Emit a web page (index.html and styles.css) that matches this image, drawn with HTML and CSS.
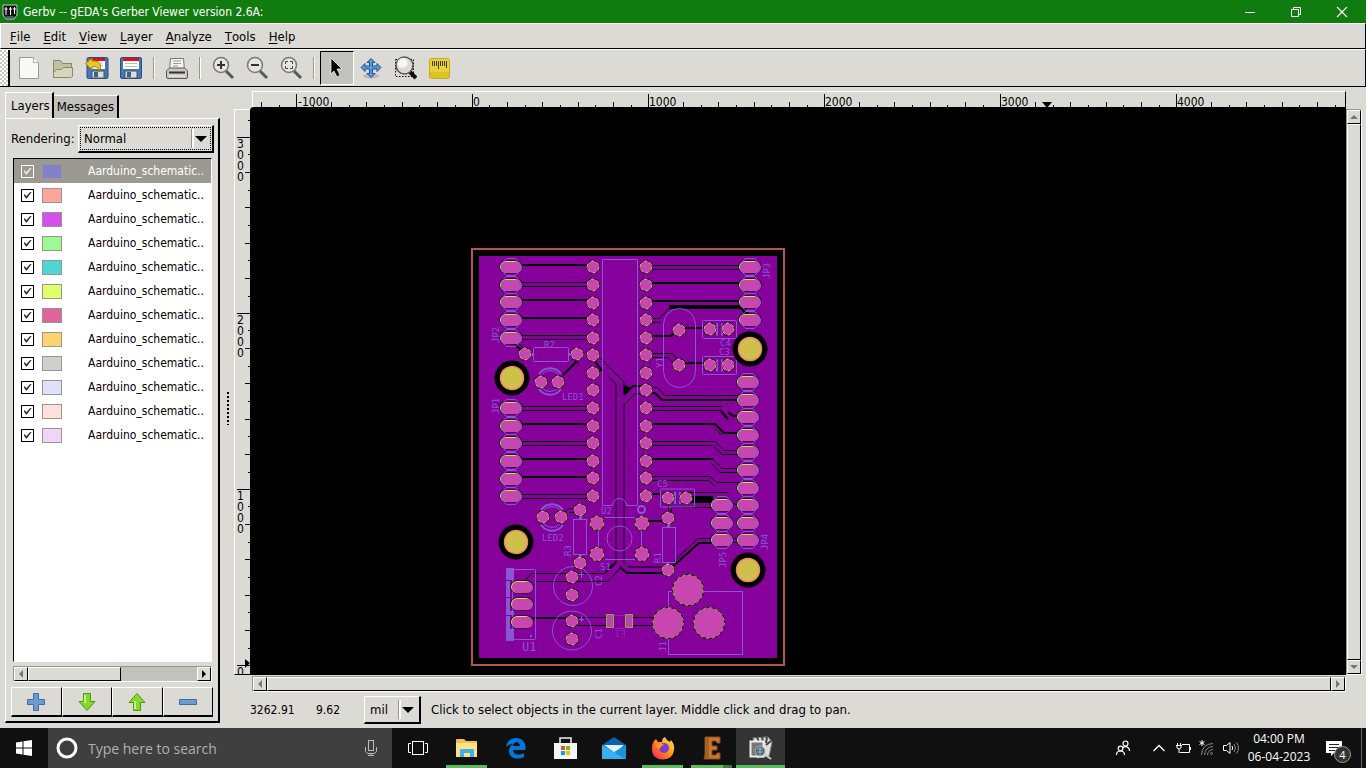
FILE: index.html
```html
<!DOCTYPE html>
<html lang="en">
<head>
<meta charset="utf-8">
<title>Gerbv</title>
<link rel="stylesheet" href="styles.css">
</head>
<body>
<header class="titlebar">
  <svg class="app-icon" width="16" height="16" viewBox="0 0 16 16"><path d="M1 1h14v10l-3 4H4l-3-4z" fill="#111" stroke="#c5cdd8"/><path d="M2.500 5h3M4 3v8M7 5h3M8.500 3v8M11 5h3M12.500 3v7" stroke="#fff" fill="none"/><path d="M4 13h8" stroke="#8aa0bd"/></svg>
  <h1 class="title">Gerbv -- gEDA's Gerber Viewer version 2.6A:</h1>
  <div class="window-buttons">
    <button aria-label="Minimize"><svg width="12" height="12"><path d="M1 6.500h10" stroke="#fff"/></svg></button>
    <button aria-label="Restore"><svg width="12" height="12" fill="none" stroke="#fff"><path d="M1.500 3.500h7v7h-7zM3.500 3v-1.500h7v7h-2"/></svg></button>
    <button aria-label="Close"><svg width="12" height="12"><path d="M1 1l10 10M11 1L1 11" stroke="#fff" stroke-width="1.200"/></svg></button>
  </div>
</header>
<nav class="menubar">
  <button><u>F</u>ile</button><button><u>E</u>dit</button><button><u>V</u>iew</button><button><u>L</u>ayer</button><button><u>A</u>nalyze</button><button><u>T</u>ools</button><button><u>H</u>elp</button>
</nav>
<div class="toolbar">
  <span class="handle"></span>
  <button aria-label="New"><svg width="24" height="24"><path d="M2.500 1.500h14l5 5v16h-19z" fill="#f8f8f7" stroke="#9a9a96"/><path d="M16.500 1.500v5h5" fill="#fff" stroke="#aaa"/></svg></button>
  <button aria-label="Open"><svg width="24" height="24"><path d="M2.500 21V4.500h7l2 3h9V12" fill="#bfc39f" stroke="#85896a"/><path d="M2.500 21.500v-5l3-3h5l2-2h9v9l-2 1z" fill="#d3d8bb" stroke="#85896a"/></svg></button>
  <button aria-label="Revert"><svg width="24" height="24"><rect x="2" y="1.500" width="21" height="21" rx="1.500" fill="#4477b4" stroke="#244f8b"/><path d="M5 2h15v11H5z" fill="#fff"/><path d="M5 2h15v3H5z" fill="#d11"/><path d="M7 7h11M7 10h11" stroke="#bbb"/><path d="M7 15h12v7H7z" fill="#ddd" stroke="#456"/><path d="M9 16h4v5H9z" fill="#3c5f91"/><path d="M.5 7.500L7 2v3c7-1 11 4 7 11 0-4-2-6-7-5v3z" fill="#edc525" stroke="#a57c00"/></svg></button>
  <button aria-label="Save"><svg width="24" height="24"><rect x="1.500" y="1.500" width="21" height="21" rx="1.500" fill="#4477b4" stroke="#244f8b"/><path d="M4 2h16v11H4z" fill="#fff"/><path d="M4 2h16v3H4z" fill="#d11"/><path d="M6 7.500h12M6 10.500h12" stroke="#bbb"/><path d="M6 15h12v7H6z" fill="#ddd" stroke="#456"/><path d="M8 16h4v5H8z" fill="#3c5f91"/></svg></button>
  <span class="sep"></span>
  <button aria-label="Print"><svg width="24" height="24"><path d="M5.500 2.500h13l1 12h-15z" fill="#f5f5f3" stroke="#777"/><path d="M8 5h8M8 7.500h8M8 10h5" stroke="#999"/><path d="M1.500 15l3-3h15l3 3v6q0 1.500-1.500 1.500H3q-1.500 0-1.500-1.500z" fill="#c9c9c5" stroke="#555"/><path d="M4 16.500h16" stroke="#333" stroke-width="2"/><path d="M4 20h16" stroke="#f4f4f4"/></svg></button>
  <span class="sep"></span>
  <button aria-label="Zoom in"><svg width="24" height="24"><path d="M15 15l7 7" stroke="#555b57" stroke-width="3"/><circle cx="10" cy="9" r="7.500" fill="#e5e5e1" stroke="#777a75" stroke-width="1.500"/><path d="M6 9h8M10 5v8" stroke="#333" stroke-width="2"/></svg></button>
  <button aria-label="Zoom out"><svg width="24" height="24"><path d="M15 15l7 7" stroke="#555b57" stroke-width="3"/><circle cx="10" cy="9" r="7.500" fill="#e5e5e1" stroke="#777a75" stroke-width="1.500"/><path d="M6 9h8" stroke="#333" stroke-width="2"/></svg></button>
  <button aria-label="Zoom to fit"><svg width="24" height="24"><path d="M15 15l7 7" stroke="#555b57" stroke-width="3"/><circle cx="10" cy="9" r="7.500" fill="#e5e5e1" stroke="#777a75" stroke-width="1.500"/><path d="M6.500 8V5.500H9M11 5.500h2.500V8M13.500 10v2.500H11M9 12.500H6.500V10" fill="none" stroke="#444"/></svg></button>
  <span class="sep"></span>
  <button class="pressed" aria-label="Pointer"><svg width="24" height="24"><path d="M6 2l11 11h-5l3 6-3 2-3-6-3 3z" fill="#000" stroke="#fff" stroke-width=".7"/></svg></button>
  <button aria-label="Pan"><svg width="24" height="24"><ellipse cx="12" cy="20" rx="8" ry="2.500" fill="#bbb9b3"/><path d="M12 2.500l4 4h-2.500V10H18V7.500l4 4-4 4V13h-4.500v4.500H16l-4 4-4-4h2.500V13H6v2.500l-4-4 4-4V10h4.500V6.500H8z" fill="#5c94d6" stroke="#1e5197"/></svg></button>
  <button aria-label="Zoom area"><svg width="24" height="24"><rect x="2.500" y="3.500" width="18" height="17" fill="none" stroke="#000" stroke-dasharray="1.500 1.500"/><path d="M17 16l6 6" stroke="#111" stroke-width="4"/><circle cx="11.500" cy="9.500" r="8.500" fill="#dadad8" stroke="#555" stroke-width="1.500"/><circle cx="9.500" cy="7" r="5" fill="#fff" opacity=".75"/></svg></button>
  <button aria-label="Measure"><svg width="24" height="24"><rect x="2.500" y="2.500" width="20" height="20" rx="2" fill="#e8d23b" stroke="#c4aa25"/><path d="M3 16h19v6H3z" fill="#dcc321"/><path d="M5.500 5v5M7.500 5v5M9.500 5v5M11.500 5v8M13.500 5v5M15.500 5v5M17.500 5v5M19.500 5v7" stroke="#3d3712"/></svg></button>
</div>
<main class="workspace">
  <aside class="sidebar">
    <div class="tabs" role="tablist"><button class="tab active" role="tab">Layers</button><button class="tab" role="tab">Messages</button></div>
    <section class="panel">
      <div class="rendering">
        <label for="rendering">Rendering:</label>
        <span class="combo wide"><select id="rendering"><option>Normal</option></select><svg width="12" height="8"><path d="M0 1h12L6 7z"/></svg></span>
      </div>
      <ul class="layers">
        <li class="selected"><input type="checkbox" id="l1" checked><i class="swatch c1"></i><label for="l1">Aarduino_schematic..</label></li>
        <li><input type="checkbox" id="l2" checked><i class="swatch c2"></i><label for="l2">Aarduino_schematic..</label></li>
        <li><input type="checkbox" id="l3" checked><i class="swatch c3"></i><label for="l3">Aarduino_schematic..</label></li>
        <li><input type="checkbox" id="l4" checked><i class="swatch c4"></i><label for="l4">Aarduino_schematic..</label></li>
        <li><input type="checkbox" id="l5" checked><i class="swatch c5"></i><label for="l5">Aarduino_schematic..</label></li>
        <li><input type="checkbox" id="l6" checked><i class="swatch c6"></i><label for="l6">Aarduino_schematic..</label></li>
        <li><input type="checkbox" id="l7" checked><i class="swatch c7"></i><label for="l7">Aarduino_schematic..</label></li>
        <li><input type="checkbox" id="l8" checked><i class="swatch c8"></i><label for="l8">Aarduino_schematic..</label></li>
        <li><input type="checkbox" id="l9" checked><i class="swatch c9"></i><label for="l9">Aarduino_schematic..</label></li>
        <li><input type="checkbox" id="l10" checked><i class="swatch c10"></i><label for="l10">Aarduino_schematic..</label></li>
        <li><input type="checkbox" id="l11" checked><i class="swatch c11"></i><label for="l11">Aarduino_schematic..</label></li>
        <li><input type="checkbox" id="l12" checked><i class="swatch c12"></i><label for="l12">Aarduino_schematic..</label></li>
      </ul>
      <div class="scroll list-scroll"><button aria-label="Scroll left"><svg width="8" height="8"><path d="M6 0v8L2 4z" fill="#777"/></svg></button><span class="thumb"></span><button class="end" aria-label="Scroll right"><svg width="8" height="8"><path d="M2 0v8l4-4z"/></svg></button></div>
      <div class="actions">
        <button aria-label="Add layer"><svg width="20" height="20"><path d="M7.500 1.500h5v6h6v5h-6v6h-5v-6h-6v-5h6z" fill="#6f9ad0" stroke="#3f6ca9"/></svg></button>
        <button aria-label="Move down"><svg width="20" height="20"><path d="M6.500 1.500h7v8h4.500l-8 9-8-9h4.500z" fill="#85d834" stroke="#4e9a06"/><path d="M8 3v8" stroke="#c5f18e" stroke-width="2"/></svg></button>
        <button aria-label="Move up"><svg width="20" height="20"><path d="M6.500 18.500h7v-8h4.500l-8-9-8 9h4.500z" fill="#85d834" stroke="#4e9a06"/><path d="M8 9v8" stroke="#c5f18e" stroke-width="2"/></svg></button>
        <button aria-label="Remove layer"><svg width="20" height="20"><path d="M1.500 7.500h17v5h-17z" fill="#6f9ad0" stroke="#3f6ca9"/></svg></button>
      </div>
    </section>
  </aside>
  <div class="splitter"></div>
  <section class="viewer">
    <div class="plot">
      <div class="ruler-top">
        <svg width="100%" height="16">
          <defs><pattern id="ht" x="42" y="0" width="176" height="16" patternUnits="userSpaceOnUse"><path d="M1.500 2v14M36.500 10v6M71.500 10v6M107.500 10v6M142.500 10v6M18.500 13v3M54.500 13v3M89.500 13v3M124.500 13v3M160.500 13v3" stroke="#000"/></pattern></defs>
          <rect width="100%" height="16" fill="url(#ht)"/>
          <g class="ruler-text"><text x="45" y="14">-1000</text><text x="220" y="14">0</text><text x="396" y="14">1000</text><text x="572" y="14">2000</text><text x="748" y="14">3000</text><text x="924" y="14">4000</text></g>
          <path d="M789 10h10l-5 6z"/>
        </svg>
      </div>
      <div class="ruler-left">
        <svg width="16" height="100%">
          <defs><pattern id="vt" x="0" y="26" width="16" height="176" patternUnits="userSpaceOnUse"><path d="M2 1.500h14M10 36.500h6M10 71.500h6M10 107.500h6M10 142.500h6M13 18.500h3M13 54.500h3M13 89.500h3M13 124.500h3M13 160.500h3" stroke="#000"/></pattern></defs>
          <rect width="16" height="100%" fill="url(#vt)"/>
          <g class="ruler-text"><text><tspan x="2" y="38">3</tspan><tspan x="2" dy="11">0</tspan><tspan x="2" dy="11">0</tspan><tspan x="2" dy="11">0</tspan></text><text><tspan x="2" y="214">2</tspan><tspan x="2" dy="11">0</tspan><tspan x="2" dy="11">0</tspan><tspan x="2" dy="11">0</tspan></text><text><tspan x="2" y="390">1</tspan><tspan x="2" dy="11">0</tspan><tspan x="2" dy="11">0</tspan><tspan x="2" dy="11">0</tspan></text><text x="2" y="566">0</text></g>
          <path d="M10 549v9l5-5z"/>
        </svg>
      </div>
      <div class="canvas">
        <svg class="pcb" width="1096" height="568" viewBox="250 107 1096 568">
          <defs>
            <g id="p"><circle r="6.300" fill="#c846af" stroke="#000" stroke-dasharray="8 1.900"/><circle r="5.800" fill="#c846af" stroke="#cfe04b" stroke-width=".9" stroke-dasharray="3 3.070"/><circle r="5.300" fill="#c846af"/></g>
            <g id="s"><circle r="7.500" fill="#000"/><circle r="6.800" fill="#c846af" stroke="#cfe04b" stroke-width=".9" stroke-dasharray="3 3"/></g>
            <g id="b"><circle r="15.700" fill="#c846af" stroke="#000" stroke-width="1"/><circle r="15.300" fill="none" stroke="#cfe04b" stroke-width=".8" stroke-dasharray="3 3"/></g>
            <g id="o"><rect x="-11.500" y="-6.500" width="23" height="13" rx="6" fill="#000"/><rect x="-11" y="-6" width="21" height="12" rx="6" fill="#cfe04b"/><rect x="-10" y="-5" width="21" height="11" rx="5" fill="#c846af"/></g>
            <g id="j"><use href="#o"/><path d="M-4.500-8.500h9l4.500 5v7l-4.500 5h-9l-4.500-5v-7z" fill="none" stroke="#8558d8"/></g>
            <g id="h"><circle r="17.500" fill="#000"/><circle r="11.500" fill="#cfc04b" stroke="#f08a6a" stroke-width="1.500"/></g>
            <g id="led"><path d="M-11-7A13.500 13.500 0 0 1 11-7M-11 8A13.500 13.500 0 0 0 11 8" stroke-width="2"/><path d="M-8-7A11 11 0 0 1 8-7M-8 7A11 11 0 0 0 8 7"/></g>
            <g id="cap"><rect x="-17" y="-9" width="34" height="18" rx="1"/><path d="M-2.500-6V6M2.500-6V6" stroke-width="2"/></g>
            <g id="column"><use href="#p" y="267"/><use href="#p" y="285"/><use href="#p" y="303"/><use href="#p" y="320"/><use href="#p" y="338"/><use href="#p" y="355"/><use href="#p" y="373"/><use href="#p" y="390"/><use href="#p" y="408"/><use href="#p" y="426"/><use href="#p" y="443"/><use href="#p" y="461"/><use href="#p" y="478"/><use href="#p" y="496"/></g>
          </defs>
          <rect x="472" y="249" width="312" height="416" fill="none" stroke="#b4564e" stroke-width="2"/>
          <rect x="479" y="256" width="298" height="402" rx="1" fill="#86009b"/>
          <g fill="none" stroke="#000">
            <path stroke-width="2" d="M520 265h68M520 300h68M520 318h68M520 424h68M520 459h68M520 477h68M651 283h90M651 301h90M514 343l8 8M651 336h20l6-6M684 328h22M684 363h22M651 393h4l7 7h78M720 410l8 9M728 412l5 4h8M651 424h64l9 9h16M651 459h62M651 494h10M641 386h-8l-9 9M563 375l14-14M533 618h34M648 521h14M620 567l7 6h38M671 568l28-25h13M616 562l-10 10M595 362l7 8-5 1"/>
            <path d="M520 282.500h68M520 286.500h68M520 335.500h68M520 339.500h68M520 406.500h68M520 410.500h68M520 441.500h68M520 445.500h68M520 494.500h68M520 498.500h68M651 265.500h90M651 269.500h90M651 318.500h8l11-11M651 322.500h10M518 343l8 7M578 361v4M598 356l26 26v12M608 377l8 7v178M641 394h-6l-11 11v158l4 4h37M651 353.500h21l6 6M651 357.500h17l6 6M650 387.500h7l8 8h75M651 406.500h71M651 410.500h69M715 429l8 7M651 441.500h64l9 9h14M651 445.500h62l9 9h16M713 459l9 9.500h16M711 463l9 9.500h18M651 476.500h59l7 6h22M651 480.500h58l6 6M680 492.500h49M671 507.500h42M668.500 503v10M671.500 507v6M673 562l25-23.500h14M616 562l-11 11.500h-73l-8 8M620 568l-12 13.500h-73M621 568l6 5M565 512l4-3.500h6M569 512.500h6M578 617.500h28M578 625.500h28M633 617.500h22M633 625.500h22M732 538.500h8M732 542.500h8M732 503l8 3"/>
            <path stroke-width="4" d="M669 307h72l7 7"/><path stroke-width="7" d="M691 499.500h22"/>
            <path d="M624 385v10l6-7z" fill="#000"/>
          </g>
          <g fill="none" stroke="#8558d8">
            <path d="M612.500 505.500h-10v-246h35v246h-11a7 7 0 0 0-14 0z" /><circle cx="641.500" cy="509.500" r="3.500" stroke-width="2"/>
            <rect x="533.500" y="347.500" width="35" height="14" rx="1"/><path d="M530 354.500h4M569 354.500h4M580.500 515v4M580.500 554v4M668.500 524v4M668.500 562v4" stroke-width="3"/>
            <rect x="573.500" y="519.500" width="13" height="35"/><rect x="662.500" y="527.500" width="13" height="35"/>
            <use href="#led" x="550" y="381"/><use href="#led" x="552" y="517"/>
            <rect x="663.500" y="308.500" width="32" height="79" rx="16"/>
            <use href="#cap" x="719.500" y="329.500"/><use href="#cap" x="719.500" y="365.500"/><use href="#cap" x="677.500" y="498"/>
            <circle cx="619.500" cy="538.500" r="12.500"/><path d="M605 517.500h30M605 559.500h30M598.500 530v17M641.500 530v17"/>
            <circle cx="573" cy="586" r="19.500"/><circle cx="572" cy="630.500" r="19.500"/><path d="M578 574.500h6M581.500 572v6M578 619.500h6M581.500 616v6"/>
            <rect x="512.500" y="569.500" width="23" height="70" rx="1"/><rect x="668.500" y="591.500" width="74" height="63"/>
            <path d="M614 615.500h11M614 628.500h11" opacity=".4"/>
          </g>
          <path d="M506 568h8v12h-8zM506 581h4v16h-4zM506 598h4v13h-4zM506 611h8v4h-8zM506 616h4v13h-4zM506 629h8v12h-8zM530 635h2v2h-2z" fill="#8558d8"/>
          <g>
            <use href="#column" x="593"/><use href="#column" x="646"/>
            <use href="#p" x="525" y="354"/><use href="#p" x="577" y="354"/><use href="#p" x="541" y="382"/><use href="#p" x="558" y="382"/><use href="#p" x="543" y="517"/><use href="#p" x="561" y="517"/><use href="#p" x="580" y="510"/><use href="#p" x="580" y="563"/><use href="#p" x="572" y="577"/><use href="#p" x="572" y="595"/><use href="#p" x="572" y="621"/><use href="#p" x="572" y="639"/>
            <use href="#p" x="679" y="330"/><use href="#p" x="679" y="365"/><use href="#p" x="710" y="329"/><use href="#p" x="728" y="329"/><use href="#p" x="710" y="365"/><use href="#p" x="728" y="365"/><use href="#p" x="668" y="498"/><use href="#p" x="686" y="498"/><use href="#p" x="668" y="518"/><use href="#p" x="668" y="570"/>
            <use href="#s" x="597" y="523"/><use href="#s" x="642" y="523"/><use href="#s" x="597" y="554"/><use href="#s" x="642" y="554"/>
            <use href="#b" x="688" y="590"/><use href="#b" x="668" y="623"/><use href="#b" x="709" y="623"/>
            <use href="#o" x="522" y="587"/><use href="#o" x="522" y="604"/><use href="#o" x="522" y="622"/>
            <use href="#j" x="511" y="267"/><use href="#j" x="511" y="285"/><use href="#j" x="511" y="302"/><use href="#j" x="511" y="320"/><use href="#j" x="511" y="338"/>
            <use href="#j" x="511" y="408"/><use href="#j" x="511" y="426"/><use href="#j" x="511" y="443"/><use href="#j" x="511" y="461"/><use href="#j" x="511" y="479"/><use href="#j" x="511" y="496"/>
            <use href="#j" x="750" y="267"/><use href="#j" x="750" y="285"/><use href="#j" x="750" y="302"/><use href="#j" x="750" y="320"/>
            <use href="#j" x="748" y="382"/><use href="#j" x="748" y="400"/><use href="#j" x="748" y="417"/><use href="#j" x="748" y="435"/><use href="#j" x="748" y="452"/><use href="#j" x="748" y="470"/><use href="#j" x="748" y="488"/><use href="#j" x="748" y="505"/><use href="#j" x="748" y="523"/><use href="#j" x="748" y="540"/>
            <use href="#j" x="722" y="505"/><use href="#j" x="722" y="523"/><use href="#j" x="722" y="540"/>
            <path d="M606.500 614.500h7v13h-7zM625.500 614.500h7v13h-7z" fill="#b545b0" stroke="#8fae2a"/>
            <use href="#h" x="512" y="378"/><use href="#h" x="750" y="349"/><use href="#h" x="516" y="542"/><use href="#h" x="748" y="570"/>
          </g>
          <g class="silk">
            <text x="544" y="348">R2</text><text x="562" y="400">LED1</text><text x="542" y="541">LED2</text><text x="601" y="514">U2</text><text x="600" y="570">S1</text><text x="657" y="487">C5</text><text x="720" y="346">C4</text><text x="719" y="355">C3</text><text class="large" x="522" y="651">U1</text>
            <text transform="translate(499 343) rotate(-90)">JP2</text><text transform="translate(499 414) rotate(-90)">JP1</text><text transform="translate(770 279) rotate(-90)">JP3</text><text transform="translate(768 550) rotate(-90)">JP4</text><text transform="translate(726 568) rotate(-90)">JP5</text>
            <text transform="translate(663 368) rotate(-90)">Y1</text><text transform="translate(661 563) rotate(-90)">R1</text><text transform="translate(571 556) rotate(-90)">R3</text><text transform="translate(602 586) rotate(-90)">C2</text><text transform="translate(602 639) rotate(-90)">C1</text><text transform="translate(666 652) rotate(-90)">J1</text>
            <text class="faint" transform="translate(626 637) scale(-1 1)">F1</text>
          </g>
        </svg>
      </div>
      <div class="scroll vertical"><button aria-label="Scroll up"><svg width="8" height="8"><path d="M0 6h8L4 2z" fill="#777"/></svg></button><span class="thumb"></span><button aria-label="Scroll down"><svg width="8" height="8"><path d="M0 2h8L4 6z" fill="#777"/></svg></button></div>
      <div class="scroll horizontal"><button aria-label="Scroll left"><svg width="8" height="8"><path d="M6 0v8L2 4z" fill="#777"/></svg></button><span class="thumb"></span><button aria-label="Scroll right"><svg width="8" height="8"><path d="M2 0v8l4-4z" fill="#777"/></svg></button></div>
    </div>
    <div class="status">
      <span class="coord">3262.91</span><span class="coord second">9.62</span>
      <span class="combo unit"><select aria-label="Unit"><option>mil</option></select><svg width="12" height="8"><path d="M0 1h12L6 7z"/></svg></span>
      <span>Click to select objects in the current layer. Middle click and drag to pan.</span>
    </div>
  </section>
</main>
<footer class="taskbar">
  <button class="start" aria-label="Start"><svg width="16" height="16" fill="#fff"><path d="M0 2.500l6.500-1v6H0zM7.500 1.300L16 0v7.500H7.500zM0 8.500h6.500v6L0 13.500zM7.500 8.500H16V16l-8.500-1.300z"/></svg></button>
  <div class="search">
    <svg width="22" height="22"><circle cx="11" cy="11" r="9" fill="none" stroke="#fff" stroke-width="3"/></svg>
    <input aria-label="Search" placeholder="Type here to search">
    <svg width="12" height="16" fill="none" stroke="#bbb"><rect x="3.500" y=".5" width="5" height="10" /><path d="M.5 7v4.500l2 2h7l2-2V7M6 13v2.500M3 15.500h6"/></svg>
  </div>
  <div class="apps">
    <button aria-label="Task view"><svg width="20" height="16" fill="none" stroke="#fff"><rect x="4.500" y="1.500" width="11" height="13"/><path d="M3 3.500H.5v9H3M17 3.500h2.500v9H17"/></svg></button>
    <button class="open" aria-label="File Explorer"><svg width="24" height="24"><path d="M1 4q0-1 1-1h7l2 2h11v16H1z" fill="#f3c145"/><path d="M1 7h21v14H1z" fill="#ffe08b"/><path d="M5 21v-7q0-1 1-1h12q1 0 1 1v7h-4v-4H9v4z" fill="#3eb2e6"/></svg></button>
    <button aria-label="Edge"><svg width="24" height="24"><path d="M2 11C3 5 7 2 12 2c6 0 9.500 4 9.500 9v3H9c0 5 7 6 11 3v4c-6 3-15 2-15-6 0-3 1-5 4-7-3 0-5 1-7 3zm7-1h7c0-5-7-5-7 0z" fill="#0078d7"/></svg></button>
    <button aria-label="Store"><svg width="24" height="24"><path d="M7 7V2h11v5" fill="none" stroke="#eee" stroke-width="1.500"/><path d="M1 7h23v16H1z" fill="#f5f5f5"/><path d="M8 10h4v4H8z" fill="#f25022"/><path d="M13 10h4v4h-4z" fill="#7fba00"/><path d="M8 15h4v4H8z" fill="#00a4ef"/><path d="M13 15h4v4h-4z" fill="#ffb900"/></svg></button>
    <button aria-label="Mail"><svg width="24" height="24"><path d="M0 9l12-8 12 8v14H0z" fill="#0a5fae"/><path d="M2 9h20l-9 8z" fill="#e9eef5"/><path d="M0 9l24 14H0z" fill="#36b3ef"/><path d="M24 9v14L12 16z" fill="#1a93de"/></svg></button>
    <button class="open" aria-label="Firefox"><svg width="24" height="24"><defs><linearGradient id="fx" x1="1" y1="0" x2="0" y2="1"><stop offset="0" stop-color="#fff44f"/><stop offset=".5" stop-color="#ff8a16"/><stop offset="1" stop-color="#f5156c"/></linearGradient></defs><path d="M3 5l2-2 2 3h4q0-4 3-5 1 3 5 5l1-2q4 5 3 10-1 9-11 9.500Q1 23 1 13q0-5 2-8z" fill="url(#fx)"/><circle cx="13" cy="12" r="5" fill="#7a3bd0"/><path d="M5 9q5-3 8 0-4 1-4 4-3-1-4-4z" fill="#ff9a20"/></svg></button>
    <button class="open split" aria-label="Eagle"><svg width="24" height="24"><path d="M5 1h15v6h-3l-1-2h-4v5h5v4h-5v5h4l1-2h3v6H4l1-4z" fill="#c87832" stroke="#884919"/><path d="M6 2h3v20H5z" fill="#a85f24"/></svg></button>
    <button class="open current" aria-label="Gerbv"><svg width="24" height="24"><path d="M4 2l15-1 4 5-3 14-12 2z" fill="#ddd" stroke="#888"/><path d="M8 1l2 5M13 1l1 5M18 1l-1 6M22 5l-5 4" stroke="#444" stroke-width="2"/><path d="M1.500 5.500h13v15h-13z" fill="#777" stroke="#eee" stroke-width="2"/><path d="M15 18l7 5" stroke="#ccc" stroke-width="2"/><circle cx="11" cy="15" r="5" fill="#496078" stroke="#abb"/><path d="M8 13h6M8 16h6M11 11v8" stroke="#9bb"/></svg></button>
  </div>
  <div class="tray">
    <button class="people" aria-label="People"><svg width="16" height="16" fill="none" stroke="#fff" stroke-width="1.200"><circle cx="10.500" cy="3.500" r="2.500"/><path d="M7.500 8q3-3 6 0 1 1 1 3"/><circle cx="5.500" cy="8.500" r="2.300"/><path d="M1.500 15q0-4 4-4t4 4"/></svg></button>
    <button aria-label="Hidden icons"><svg width="12" height="8" fill="none" stroke="#fff" stroke-width="1.300"><path d="M.5 7L6 1.500 11.500 7"/></svg></button>
    <button aria-label="Battery"><svg width="16" height="14" fill="none" stroke="#fff"><path d="M7 3.500h7.500v8H5M15.500 6v3M1 4.500h6M2.500 2v2M5.500 2v2M2 5v2q2 2 4 0V5M4 8v4"/></svg></button>
    <button aria-label="Network"><svg width="16" height="16" fill="none" stroke="#888"><path d="M2.500 15Q3 4 14 3.500M5.500 15Q6 7 14 6.500M8.500 15Q9 10 14 9.500"/><circle cx="12.500" cy="13.500" r="1"/><path d="M3 0v6M.5 1.500l5 3M5.500 1.500l-5 3" stroke="#fff"/></svg></button>
    <button aria-label="Volume"><svg width="16" height="14" fill="none" stroke="#fff"><path d="M.5 4.500h3l3.500-3v11l-3.500-3h-3zM9 5q1.500 2 0 4"/><path d="M11 3q3 4 0 8M13.500 1.500q4 5.500 0 11" stroke="#888"/></svg></button>
    <div class="clock"><time>04:00 PM</time><time>06-04-2023</time></div>
    <button class="note" aria-label="Notifications"><svg width="16" height="15"><path d="M0 0h16v12H8l-3 3v-3H0z" fill="#fff"/><path d="M3 3.500h10M3 6.500h10M3 9.500h6" stroke="#222"/></svg><span class="badge">4</span></button>
  </div>
</footer>
</body>
</html>
```
FILE: styles.css
```css
* { box-sizing: border-box; }
body { margin: 0; height: 100vh; display: flex; flex-direction: column; overflow: hidden; background: #dcdad5; color: #000; font: 13px/16px "DejaVu Sans Condensed", "DejaVu Sans", sans-serif; }
button { border: 0; padding: 0; background: none; color: inherit; font: inherit; display: flex; align-items: center; justify-content: center; }
svg { display: block; flex: none; }

.titlebar { height: 23px; flex: none; display: flex; align-items: center; background: #107c10; color: #fff; padding: 0 1px 0 2px; }
.title { margin: 0 auto 0 5px; font: 12px/16px "DejaVu Sans Condensed", "DejaVu Sans", sans-serif; }
.window-buttons { display: flex; }
.window-buttons button { width: 46px; height: 20px; }

.menubar { height: 26px; flex: none; display: flex; align-items: center; gap: 13px; padding: 1px 9px 0; border: 1px solid #fff; border-bottom-color: #000; border-right-color: #000; }
.menubar u { text-underline-offset: 2px; }

.toolbar { height: 38px; flex: none; display: flex; align-items: center; border-top: 1px solid #fff; border-bottom: 1px solid #000; border-right: 1px solid #000; }
.toolbar button { width: 34px; height: 34px; }
.toolbar .pressed { background: #c4c2bd; border: 1px solid #000; border-right-color: #fff; border-bottom-color: #fff; }
.handle { width: 10px; height: 100%; margin-right: 2px; border-right: 2px solid #000; background: repeating-conic-gradient(#fff 0 25%, #c8c6c1 0 50%) 0 0 / 4px 4px; }
.sep { width: 2px; height: 22px; margin: 0 5px; background: #fff; border-left: 1px solid #98968f; }

.workspace { flex: 1; min-height: 0; display: flex; }
.sidebar { width: 215px; margin: 5px 0 5px 5px; display: flex; flex-direction: column; }
.tabs { display: flex; align-items: flex-end; height: 26px; flex: none; }
.tab { height: 23px; padding: 0 3px; background: #c4c2bd; border-top: 1px solid #fff; border-right: 2px solid #000; }
.tab.active { height: 26px; padding: 0 2px 0 5px; background: #dcdad5; border-left: 1px solid #fff; }
.panel { flex: 1; min-height: 0; display: flex; flex-direction: column; padding: 6px 4px 4px 5px; border: 1px solid #fff; border-right: 2px solid #000; border-bottom: 2px solid #000; }
.rendering { display: flex; align-items: center; justify-content: space-between; }
.combo { position: relative; display: block; height: 28px; border: 1px solid #fff; border-right: 2px solid #000; border-bottom: 2px solid #000; }
.combo select { appearance: none; display: block; width: 100%; height: 100%; border: 0; border-radius: 0; background: none; color: inherit; font: inherit; padding: 0 5px; }
.combo svg { position: absolute; right: 5px; top: 9px; pointer-events: none; }
.combo::after { content: ""; position: absolute; right: 18px; top: 3px; bottom: 3px; width: 2px; background: #fff; border-left: 1px solid #98968f; pointer-events: none; }
.wide { width: 136px; }
.wide select { margin: 1px; width: calc(100% - 2px); height: calc(100% - 2px); border: 1px dotted #000; padding: 0 3px; }
.layers { flex: 1; min-height: 0; margin: 5px 2px 4px; padding: 0; list-style: none; background: #fff; border: 1px solid #000; border-right-color: #fff; border-bottom-color: #fff; overflow: hidden; font-size: 12px; }
.layers li { display: flex; align-items: center; height: 24px; padding-left: 7px; white-space: nowrap; }
.layers .selected { background: #9b9992; color: #fff; }
.layers input { appearance: none; flex: none; width: 13px; height: 13px; margin: 0 8px 0 0; border: 1px solid currentColor; background: none; color: inherit; display: grid; place-items: center; }
.layers input::before { content: ""; width: 8px; height: 7px; background: currentColor; opacity: .8; clip-path: polygon(0 50%, 15% 40%, 35% 68%, 88% 0, 100% 10%, 42% 100%, 30% 100%); }
.swatch { flex: none; width: 20px; height: 15px; margin-right: 26px; border: 1px solid #98968f; }
.c1 { background: #8380cc; } .c2 { background: #ffa59d; } .c3 { background: #d44feb; } .c4 { background: #9ef993; }
.c5 { background: #4ed6d6; } .c6 { background: #dfff6c; } .c7 { background: #e0639b; } .c8 { background: #ffd36e; }
.c9 { background: #cfcfcf; } .c10 { background: #e0e0ff; } .c11 { background: #ffe0dc; } .c12 { background: #f2d4f8; }

.scroll { display: flex; background: #c4c2bd; border: 1px solid #98968f; border-right-color: #fff; border-bottom-color: #fff; }
.scroll button { flex: none; width: 14px; height: 14px; border: 1px solid #fff; border-right-color: #000; border-bottom-color: #000; }
.scroll button, .thumb { background: #dcdad5; }
.thumb { flex: 1; border: 1px solid #fff; border-right-color: #000; border-bottom-color: #000; }
.list-scroll { height: 16px; flex: none; margin: 0 2px 5px; }
.list-scroll .thumb { flex: 0 0 93px; }
.end { margin-left: auto; }
.actions { display: flex; height: 30px; flex: none; margin-right: 1px; }
.actions button { flex: 1; border: 1px solid #fff; border-right-color: #000; border-bottom: 2px solid #000; }

.splitter { width: 14px; flex: none; align-self: center; height: 34px; background: radial-gradient(circle at 2px 2px, #000 1px, transparent 1px) 6px 0 / 4px 4px repeat-y; }
.viewer { flex: 1; min-width: 0; display: flex; flex-direction: column; padding: 4px 4px 0 0; }
.plot { flex: 1; min-height: 0; display: grid; grid-template: 16px 1fr 17px / 16px 1fr 16px; }
.ruler-top { grid-column: 2; margin-left: 2px; border-top: 1px solid #fff; border-left: 1px solid #fff; border-right: 1px solid #000; overflow: hidden; }
.ruler-left { grid-column: 1; grid-row: 2; margin-top: 2px; border-top: 1px solid #fff; border-left: 1px solid #fff; border-bottom: 1px solid #000; overflow: hidden; min-height: 0; }
.ruler-text { font-size: 12px; }
.canvas { grid-column: 2; grid-row: 2; min-width: 0; min-height: 0; overflow: hidden; background: #000; border-top-left-radius: 4px; }
.vertical { grid-column: 3; grid-row: 2; flex-direction: column; margin-top: 2px; }
.horizontal { grid-column: 2; grid-row: 3; margin: 1px 0 0 2px; }
.silk { font: 9px "DejaVu Sans Mono", monospace; fill: #8558d8; }
.silk .large { font-size: 12px; }
.silk .faint { opacity: .5; }

.status { height: 36px; flex: none; display: flex; align-items: center; padding-left: 16px; }
.coord { width: 66px; font-size: 12px; }
.coord.second { width: 48px; }
.unit { width: 57px; margin-right: 10px; }

.taskbar { height: 40px; flex: none; display: flex; background: #101010; color: #fff; font: 12px/18px "Open Sans", sans-serif; }
.start { width: 48px; }
.search { width: 344px; display: flex; align-items: center; padding: 0 15px 0 8px; background: #3f3f3f; }
.search input { flex: 1; min-width: 0; border: 0; background: none; font: 14px/20px "Open Sans", sans-serif; padding: 2px 10px 0; color: #fff; outline: none; }
.search input::placeholder { color: #b0b0b0; opacity: 1; }
.apps { display: flex; padding-left: 1px; }
.apps button { width: 49px; border-bottom: 3px solid transparent; padding-top: 3px; }
.apps .open { border-image: linear-gradient(90deg, transparent 4px, #5cb85c 4px, #5cb85c 45px, transparent 45px) 0 0 3 0; }
.apps .split { border-image: linear-gradient(90deg, transparent 4px, #5cb85c 4px, #5cb85c 36px, #3d7c3d 36px, #3d7c3d 45px, transparent 45px) 0 0 3 0; }
.apps .current { background: #343434; border-image: none; border-bottom-color: #5cb85c; }
.tray { margin-left: auto; display: flex; align-items: center; padding-right: 4px; }
.tray button { width: 24px; height: 40px; }
.tray .people { width: 48px; }
.clock { display: flex; flex-direction: column; align-items: center; width: 72px; }
.tray .note { position: relative; width: 47px; height: 40px; padding-right: 8px; border-right: 1px solid #666; }
.badge { position: absolute; left: 19px; top: 18px; width: 17px; height: 17px; border: 1px solid #999; border-radius: 50%; background: #333; font-size: 11px; line-height: 15px; }
```
